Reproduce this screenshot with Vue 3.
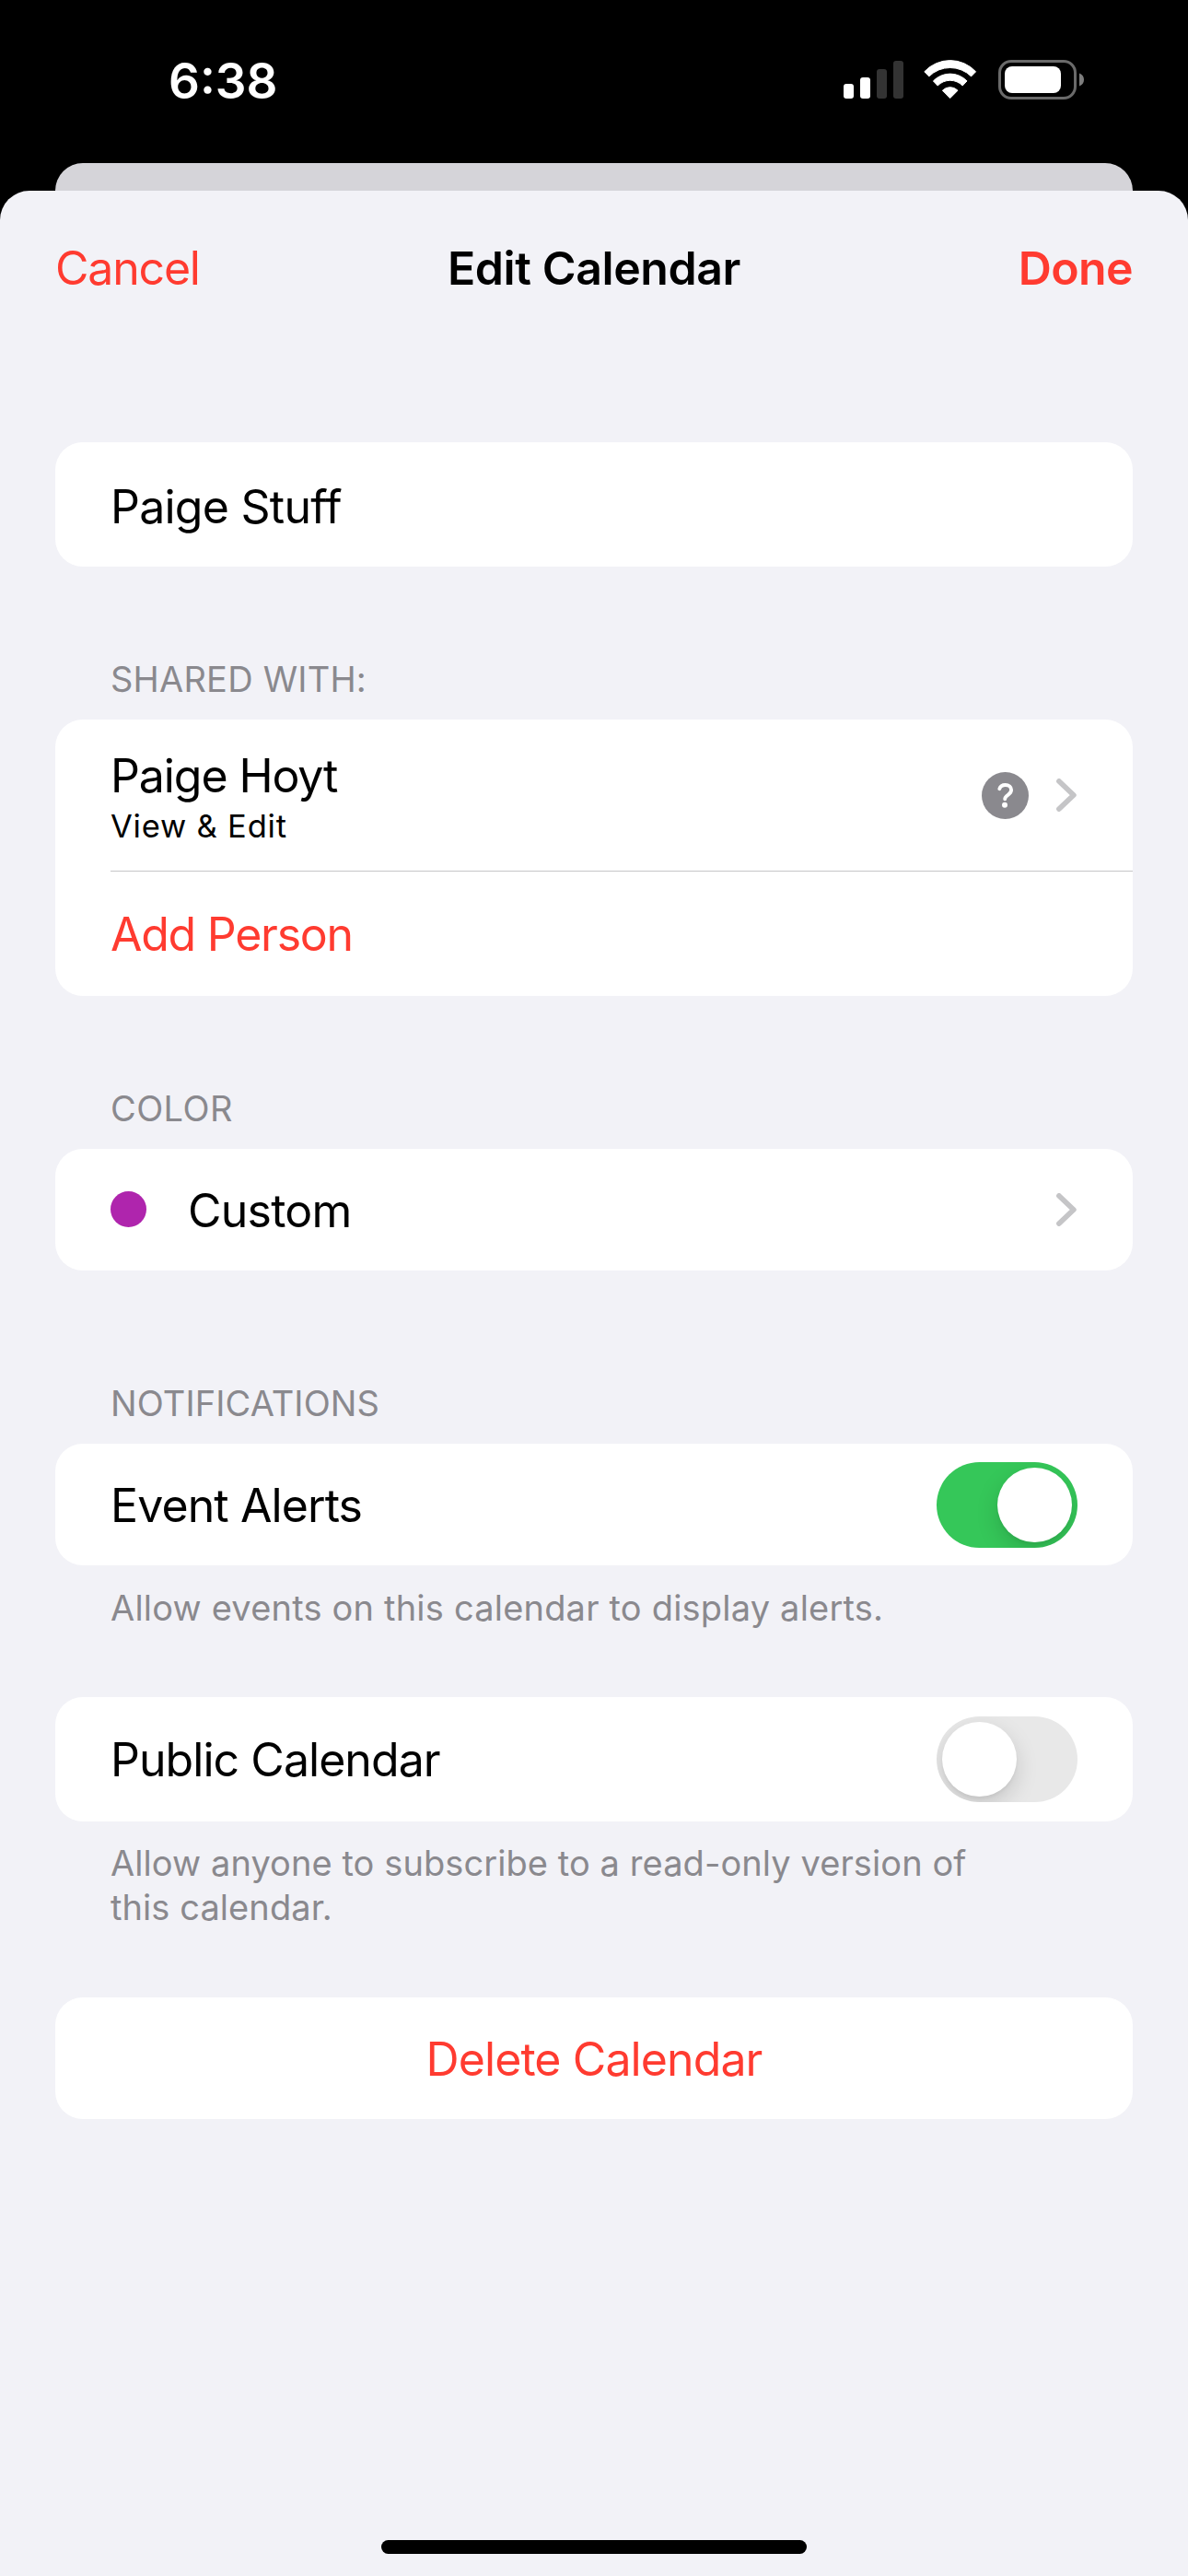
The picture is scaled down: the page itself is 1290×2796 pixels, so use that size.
<script setup>
import { ref } from 'vue'

const calendarName = ref('Paige Stuff')
const eventAlerts = ref(true)
const publicCalendar = ref(false)
</script>

<template>
  <div class="screen">
    <div class="status">
      <span class="time">6:38</span>
      <div class="indicators">
        <svg class="signal" width="65" height="41" viewBox="0 0 65 41">
          <rect x="0" y="25" width="11" height="16" rx="3" fill="#fff" />
          <rect x="18" y="18" width="11" height="23" rx="3" fill="#fff" />
          <rect x="36" y="9" width="11" height="32" rx="3" fill="#333" />
          <rect x="54" y="0" width="11" height="41" rx="3" fill="#333" />
        </svg>
        <svg class="wifi" width="58" height="43" viewBox="0 0 58 43">
          <g fill="#fff" stroke="#fff" stroke-width="1" stroke-linejoin="round">
            <path d="M.8 12.8A38 38 0 0 1 56.6 12.8L51.6 17.9A32.6 32.6 0 0 0 5.8 17.9Z" />
            <path d="M10.4 22.9A25.4 25.4 0 0 1 47 22.9L42.2 28A18.8 18.8 0 0 0 15.2 28Z" />
            <path d="M20.4 33.2A11.5 11.5 0 0 1 37 33.2L28.7 41.6Z" />
          </g>
        </svg>
        <svg class="battery" width="93" height="43" viewBox="0 0 93 43">
          <rect x="1.5" y="1.5" width="82" height="40" rx="12.5" fill="none" stroke="#6a6a6a" stroke-width="3" />
          <rect x="7" y="7" width="61" height="29" rx="8" fill="#fff" />
          <path d="M88 14.5C91.4 15.8 93 18.5 93 21.5S91.4 27.2 88 28.5Z" fill="#7d7d7d" />
        </svg>
      </div>
    </div>

    <div class="back-sheet"></div>

    <main class="sheet">
      <header class="nav">
        <span class="cancel">Cancel</span>
        <span class="title">Edit Calendar</span>
        <span class="done">Done</span>
      </header>

      <section class="card name-card">
        <div class="row"><span class="label stuff">{{ calendarName }}</span></div>
      </section>

      <h2 class="heading shared-heading">SHARED WITH:</h2>
      <section class="card">
        <div class="row person">
          <div class="who">
            <span class="label hoyt">Paige Hoyt</span>
            <span class="sub">View &amp; Edit</span>
          </div>
          <svg class="badge" width="51" height="51" viewBox="0 0 51 51">
            <circle cx="25.5" cy="25.5" r="25.5" fill="#8a898e" />
            <path d="M19.3 18.2C20.1 15.5 22.5 14 25.7 14C29.5 14 32.1 16.2 32.1 19.3C32.1 21.9 30.7 23.4 28.5 24.8C26.2 26.3 25.2 27.2 25.2 29.2" fill="none" stroke="#fff" stroke-width="3.9" stroke-linecap="round" stroke-linejoin="round" />
            <circle cx="25" cy="35.8" r="3" fill="#fff" />
          </svg>
          <svg class="chevron" width="22" height="36" viewBox="0 0 22 36">
            <path d="M3 3L18.8 18L3 33" fill="none" stroke="#c5c5c7" stroke-width="5.8" stroke-linecap="round" stroke-linejoin="round" />
          </svg>
        </div>
        <div class="divider"></div>
        <div class="row add"><span class="label red addp">Add Person</span></div>
      </section>

      <h2 class="heading color-heading">COLOR</h2>
      <section class="card">
        <div class="row short">
          <span class="dot"></span>
          <span class="label custom">Custom</span>
          <svg class="chevron" width="22" height="36" viewBox="0 0 22 36">
            <path d="M3 3L18.8 18L3 33" fill="none" stroke="#c5c5c7" stroke-width="5.8" stroke-linecap="round" stroke-linejoin="round" />
          </svg>
        </div>
      </section>

      <h2 class="heading notif-heading">NOTIFICATIONS</h2>
      <section class="card">
        <div class="row short">
          <span class="label alerts">Event Alerts</span>
          <span class="toggle" :class="{ on: eventAlerts }"><span class="knob"></span></span>
        </div>
      </section>
      <p class="note alerts-note">Allow events on this calendar to display alerts.</p>

      <section class="card">
        <div class="row">
          <span class="label public">Public Calendar</span>
          <span class="toggle" :class="{ on: publicCalendar }"><span class="knob"></span></span>
        </div>
      </section>
      <p class="note public-note">Allow anyone to subscribe to a read-only version of<br />this calendar.</p>

      <section class="card">
        <div class="row short center"><span class="label red delete">Delete Calendar</span></div>
      </section>

      <div class="home-bar"></div>
    </main>
  </div>
</template>

<style>
body {
  margin: 0;
  background: #000;
}
</style>

<style scoped>
.screen {
  width: 1290px;
  height: 2796px;
  display: flex;
  flex-direction: column;
  overflow: hidden;
  background: #000;
  color: #000;
  font-family: Inter, "Liberation Sans", sans-serif;
  white-space: nowrap;
}
.status {
  height: 177px;
  box-sizing: border-box;
  padding: 58px 113px 0 183px;
  display: flex;
  justify-content: space-between;
}
.time {
  height: 60px;
  line-height: 60px;
  font-size: 53px;
  font-weight: 600;
  color: #fff;
}
.indicators {
  display: flex;
  align-items: flex-start;
  padding-top: 7px;
}
.signal { margin: 1px 22px 0 0; }
.wifi { margin-right: 23px; }
.back-sheet {
  height: 30px;
  margin: 0 60px;
  border-radius: 30px 30px 0 0;
  background: #d5d4d9;
}
.sheet {
  flex: 1;
  display: flex;
  flex-direction: column;
  border-radius: 32px 32px 0 0;
  background: #f2f2f7;
}
.nav {
  height: 273px;
  box-sizing: border-box;
  padding: 53px 60px 0;
  display: grid;
  grid-template-columns: 1fr auto 1fr;
  align-items: start;
  font-size: 50px;
  line-height: 62px;
}
.title {
  font-weight: 600;
  letter-spacing: -0.4px;
}
.cancel,
.done,
.red { color: #ff3b30; }
.cancel { letter-spacing: -1.2px; }
.done {
  font-weight: 600;
  letter-spacing: -0.6px;
  justify-self: end;
}
.card {
  margin: 0 60px;
  border-radius: 30px;
  background: #fff;
}
.row {
  height: 135px;
  box-sizing: border-box;
  padding: 0 60px;
  display: flex;
  align-items: center;
}
.row.short {
  height: 132px;
  padding-top: 1px;
}
.row.add { padding-top: 1px; }
.name-card .row { padding-top: 5px; }
.row.person { height: 164px; }
.row.center { justify-content: center; }
.label {
  font-size: 50px;
  line-height: 60px;
}
.stuff { letter-spacing: -0.75px; }
.hoyt { letter-spacing: -1.1px; }
.addp { letter-spacing: -1.25px; }
.custom { letter-spacing: -0.75px; }
.alerts { letter-spacing: -0.9px; }
.public { letter-spacing: -0.95px; }
.delete { letter-spacing: -0.9px; }
.who {
  display: flex;
  flex-direction: column;
  padding-top: 8px;
}
.sub {
  font-size: 34.5px;
  line-height: 50px;
  letter-spacing: 0.8px;
}
.badge { margin-left: auto; }
.chevron { margin: 0 1px 0 auto; }
.badge + .chevron { margin-left: 30px; }
.short .chevron { margin-bottom: 1px; }
.divider {
  height: 1px;
  margin-left: 60px;
  background: #c6c6c8;
}
.dot {
  width: 39px;
  height: 39px;
  margin: 0 45px 2px 0;
  border-radius: 50%;
  background: #af25ad;
}
.heading,
.note {
  margin: 0 120px;
  color: #8a898e;
  font-size: 38px;
  font-weight: 400;
  line-height: 48px;
}
.shared-heading {
  padding: 98px 0 20px;
  letter-spacing: 0.2px;
}
.color-heading {
  padding: 98px 0 20px;
  letter-spacing: 0.4px;
}
.notif-heading {
  padding: 120px 0 20px;
  letter-spacing: 0.1px;
}
.alerts-note {
  padding: 22px 0 73px;
  letter-spacing: 0.2px;
}
.public-note {
  padding: 21px 0 74px;
  letter-spacing: 0.08px;
}
.toggle {
  width: 153px;
  height: 93px;
  box-sizing: border-box;
  margin-left: auto;
  padding: 6px;
  display: flex;
  border-radius: 47px;
  background: #e8e8e8;
  overflow: hidden;
}
.toggle.on {
  justify-content: flex-end;
  background: #35c759;
}
.knob {
  width: 81px;
  height: 81px;
  border-radius: 50%;
  background: #fff;
  box-shadow: 0 9px 24px rgba(0, 0, 0, 0.15), 0 3px 3px rgba(0, 0, 0, 0.04);
}
.home-bar {
  width: 462px;
  height: 15px;
  margin: auto auto 24px;
  border-radius: 8px;
  background: #000;
}
</style>
